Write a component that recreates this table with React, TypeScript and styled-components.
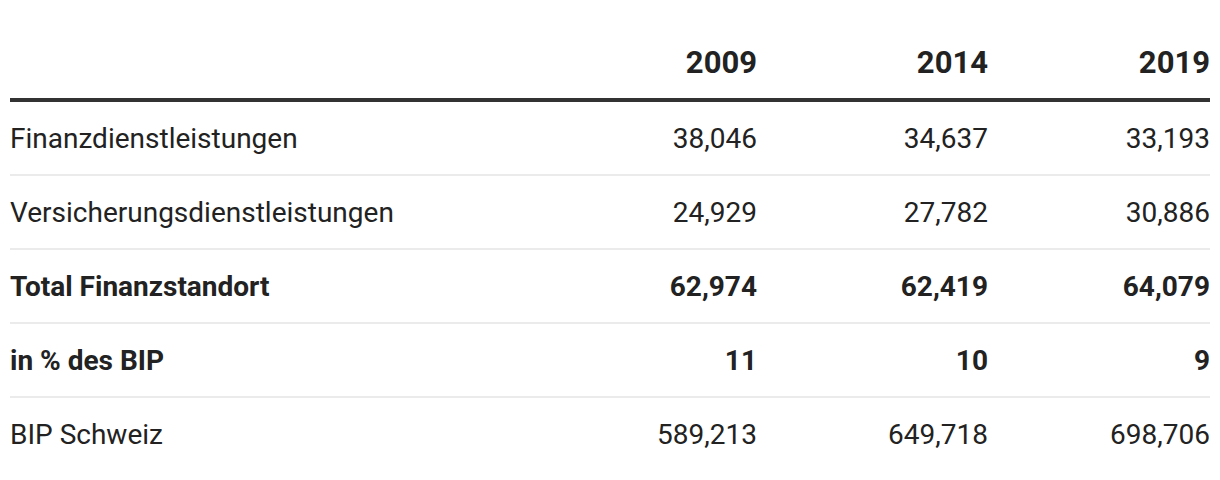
import styled, { createGlobalStyle } from 'styled-components';

const GlobalStyle = createGlobalStyle`
  body {
    margin: 0;
    background: #fff;
    font-family: Roboto, "Liberation Sans", Arial, sans-serif;
    color: #222;
  }
`;

type Row = {
  label: string;
  values: string[];
  bold?: boolean;
};

const years = ['2009', '2014', '2019'];

const rows: Row[] = [
  { label: 'Finanzdienstleistungen', values: ['38,046', '34,637', '33,193'] },
  { label: 'Versicherungsdienstleistungen', values: ['24,929', '27,782', '30,886'] },
  { label: 'Total Finanzstandort', values: ['62,974', '62,419', '64,079'], bold: true },
  { label: 'in % des BIP', values: ['11', '10', '9'], bold: true },
  { label: 'BIP Schweiz', values: ['589,213', '649,718', '698,706'] },
];

const App = () => {
  return (
    <>
      <GlobalStyle />
      <Wrapper>
        <Table>
          <HeadRow>
            <Cell />
            {years.map((y) => (
              <NumCell key={y}>{y}</NumCell>
            ))}
          </HeadRow>
          {rows.map((row) => (
            <BodyRow key={row.label} $bold={row.bold}>
              <Cell>{row.label}</Cell>
              {row.values.map((v, i) => (
                <NumCell key={i}>{v}</NumCell>
              ))}
            </BodyRow>
          ))}
        </Table>
      </Wrapper>
    </>
  );
};

const Wrapper = styled.div`
  padding: 26px 10px 0;
`;

const Table = styled.div`
  display: flex;
  flex-direction: column;
`;

const HeadRow = styled.div`
  display: grid;
  grid-template-columns: 1fr 231px 231px 222px;
  align-items: center;
  height: 72px;
  border-bottom: 4px solid #333;
  font-size: 31px;
  font-weight: 700;
`;

const BodyRow = styled.div<{ $bold?: boolean }>`
  display: grid;
  grid-template-columns: 1fr 231px 231px 222px;
  align-items: center;
  height: 72px;
  font-size: 28px;
  font-weight: ${({ $bold }) => ($bold ? 700 : 400)};
  border-bottom: 2px solid #ebebeb;

  &:last-child {
    border-bottom: none;
  }
`;

const Cell = styled.div`
  white-space: nowrap;
`;

const NumCell = styled(Cell)`
  text-align: right;
`;

export default App;
